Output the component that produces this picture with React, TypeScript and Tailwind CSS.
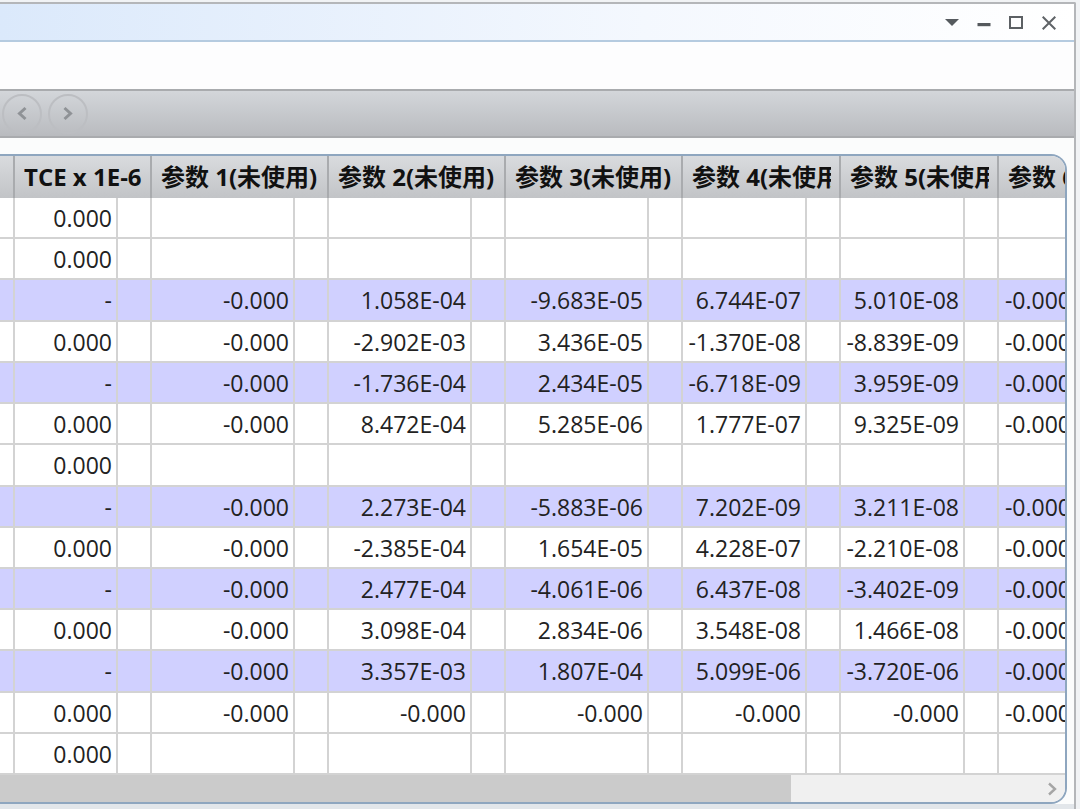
import React from "react";

const widths = [
  { w: "w-[15px]", cell: "w-[15px]", head: "" },
  { w: "w-[137px]", cell: "w-[103px]", head: "TCE x 1E-6" },
  { w: "w-[177px]", cell: "w-[143px]", head: "参数 1(未使用)" },
  { w: "w-[177px]", cell: "w-[143px]", head: "参数 2(未使用)" },
  { w: "w-[177px]", cell: "w-[143px]", head: "参数 3(未使用)" },
  { w: "w-[158px]", cell: "w-[124px]", head: "参数 4(未使用)" },
  { w: "w-[158px]", cell: "w-[124px]", head: "参数 5(未使用)" },
  { w: "w-[158px]", cell: "w-[78px]", head: "参数 6(未使用)" },
];

const rows: { hl?: boolean; v: string[] }[] = [
  { v: ["0.000"] },
  { v: ["0.000"] },
  { hl: true, v: ["-", "-0.000", "1.058E-04", "-9.683E-05", "6.744E-07", "5.010E-08", "-0.000"] },
  { v: ["0.000", "-0.000", "-2.902E-03", "3.436E-05", "-1.370E-08", "-8.839E-09", "-0.000"] },
  { hl: true, v: ["-", "-0.000", "-1.736E-04", "2.434E-05", "-6.718E-09", "3.959E-09", "-0.000"] },
  { v: ["0.000", "-0.000", "8.472E-04", "5.285E-06", "1.777E-07", "9.325E-09", "-0.000"] },
  { v: ["0.000"] },
  { hl: true, v: ["-", "-0.000", "2.273E-04", "-5.883E-06", "7.202E-09", "3.211E-08", "-0.000"] },
  { v: ["0.000", "-0.000", "-2.385E-04", "1.654E-05", "4.228E-07", "-2.210E-08", "-0.000"] },
  { hl: true, v: ["-", "-0.000", "2.477E-04", "-4.061E-06", "6.437E-08", "-3.402E-09", "-0.000"] },
  { v: ["0.000", "-0.000", "3.098E-04", "2.834E-06", "3.548E-08", "1.466E-08", "-0.000"] },
  { hl: true, v: ["-", "-0.000", "3.357E-03", "1.807E-04", "5.099E-06", "-3.720E-06", "-0.000"] },
  { v: ["0.000", "-0.000", "-0.000", "-0.000", "-0.000", "-0.000", "-0.000"] },
  { v: ["0.000"] },
];

const font = { fontFamily: '"Open Sans","Noto Sans CJK SC",sans-serif' };

function Circle({ dir }: { dir: "l" | "r" }) {
  return (
    <div className="w-[40px] h-[40px] rounded-full border-2 border-[#bcbec2] flex items-center justify-center shrink-0">
      <svg width="12" height="15" viewBox="0 0 12 15" fill="none" stroke="#8f9296" strokeWidth="3">
        <path d={dir === "l" ? "M9.5 2 L3.5 7.5 L9.5 13" : "M2.5 2 L8.5 7.5 L2.5 13"} />
      </svg>
    </div>
  );
}

export default function App() {
  return (
    <div className="w-[1080px] h-[809px] overflow-hidden bg-[#f1f3f5] pt-[2px] text-[#222]" style={font}>
      <div className="w-[1076px] h-[807px] border-t-2 border-r-2 border-[#b4b6b9] flex flex-col bg-white rounded-tr-[2px]">
        <div className="h-[38px] shrink-0 border-b-2 border-[#b5cbe0] bg-gradient-to-r from-[#dbe9fb] via-[#f4f8fe] via-60% to-white flex items-center justify-end pr-[18px] pt-[2px]">
          <svg width="14" height="14" viewBox="0 0 14 14" className="mr-[18px]"><path d="M0 3 H14 L7 10 Z" fill="#555a5e" /></svg>
          <svg width="14" height="14" viewBox="0 0 14 14" className="mr-[18px]"><rect x="0.5" y="7" width="13" height="3.2" fill="#55595d" /></svg>
          <svg width="14" height="14" viewBox="0 0 14 14" className="mr-[19px]"><rect x="1" y="1" width="12" height="11" fill="none" stroke="#5c6064" strokeWidth="2" /></svg>
          <svg width="14" height="14" viewBox="0 0 14 14"><path d="M0.7 0.7 L13.3 13.3 M13.3 0.7 L0.7 13.3" fill="none" stroke="#5f6367" strokeWidth="2" /></svg>
        </div>
        <div className="h-[47px] shrink-0 bg-[#fdfdfe]" />
        <div className="h-[49px] shrink-0 border-y-2 border-[#a9abae] bg-gradient-to-b from-[#d3d6da] to-[#b9bbbf] flex items-center pl-[2px] gap-[6px]">
          <Circle dir="l" />
          <Circle dir="r" />
        </div>
        <div className="flex-1 min-h-0 bg-[#fbfcfc] pt-[16px] flex flex-col">
          <div className="flex-1 min-h-0 mr-[7px] border-t-2 border-r-2 border-b-2 border-[#8ea6bf] rounded-tr-[16px] rounded-br-[16px] overflow-hidden flex flex-col bg-white">
            <div className="flex h-[42px] shrink-0 bg-gradient-to-b from-[#d9dbde] to-[#c2c4c7] text-[24px] font-bold leading-[42px] text-[#111]">
              {widths.map((c, i) => (
                <div key={i} className={`${c.w} shrink-0 border-r-2 border-[#a9abae] ${i > 0 ? "pl-[9px] pr-[8px]" : ""}`}>
                  <div className="overflow-hidden whitespace-nowrap">{c.head}</div>
                </div>
              ))}
            </div>
            {rows.map((r, ri) => (
              <div key={ri} className={`flex h-[41.23px] shrink-0 border-b-2 border-[#d3d3d3] ${r.hl ? "bg-[#d0d0ff]" : "bg-white"}`}>
                {widths.map((c, i) => {
                  const val = i === 0 ? "" : r.v[i - 1] ?? "";
                  return (
                    <div key={i} className={`${c.w} shrink-0 flex border-r-2 border-[#d3d3d3]`}>
                      <div className={`${c.cell} shrink-0 ${i > 0 ? "border-r-2 border-[#d3d3d3]" : ""} text-right pr-[4px] text-[23px] leading-[41px] whitespace-nowrap`}>
                        {val}
                      </div>
                    </div>
                  );
                })}
              </div>
            ))}
            <div className="flex-1 min-h-0 flex bg-[#f0f0f0]">
              <div className="w-[791px] bg-[#cbcbcb]" />
              <div className="flex-1 flex items-center justify-end pr-[8px]">
                <svg width="10" height="14" viewBox="0 0 10 14" fill="none" stroke="#a5a5a5" strokeWidth="2.4"><path d="M2 1.5 L8 7 L2 12.5" /></svg>
              </div>
            </div>
          </div>
          <div className="h-[5px] shrink-0 bg-[#e2e6ea]" />
        </div>
      </div>
    </div>
  );
}
